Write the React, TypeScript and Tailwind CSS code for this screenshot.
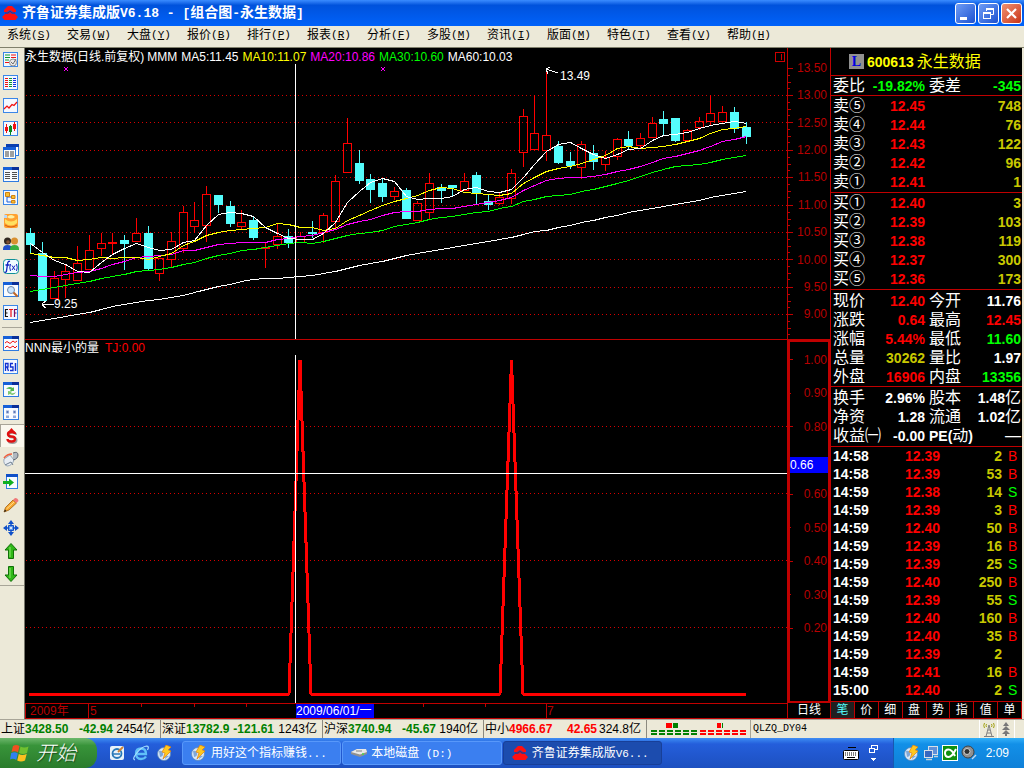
import React from "react";

type Tone = "w" | "r" | "g" | "y";

const tone: Record<Tone, string> = {
  w: "text-white",
  r: "text-[#ff0000]",
  g: "text-[#00ff00]",
  y: "text-[#c8c800]",
};

/* ---------- text helpers ---------- */

// Splits a string so that Latin runs can be set in their own face and size.
function Mixed({ text, latin }: { text: string; latin: string }) {
  const parts = text.match(/[\x00-\x7f]+|[^\x00-\x7f]+/g) ?? [];
  return (
    <>
      {parts.map((p, i) =>
        p.charCodeAt(0) < 128 ? (
          <span key={i} className={latin}>
            {p}
          </span>
        ) : (
          <span key={i}>{p}</span>
        ),
      )}
    </>
  );
}

/* ---------- title bar and menu ---------- */

function HouseLogo({ className }: { className: string }) {
  return (
    <svg viewBox="0 0 16 16" className={className} aria-hidden="true">
      <path d="M6 1H10L14 5V7H11L8 5L5 7H2V5Z" fill="#ff1010" />
      <path d="M3 9H6L8 7.500L10 9H13L16 12L13.500 15H2.500L0 12Z" fill="#ff1010" />
      <path d="M3 8H6L8 6.200L10 8H13" stroke="#901030" strokeWidth="0.800" fill="none" />
    </svg>
  );
}

function TitleBar() {
  const base =
    "flex size-[21px] items-center justify-center rounded-[3px] border border-white";
  return (
    <header className="flex h-[26px] items-center justify-between bg-linear-to-b from-[#3a8cff] via-[#0052dc] via-20% to-[#0062fa] pr-[2px] pl-[2px]">
      <div className="flex items-center gap-1">
        <HouseLogo className="size-4" />
        <h1 className="text-[14px] leading-5 font-bold whitespace-pre text-white">
          <Mixed
            text="齐鲁证券集成版V6.18 - [组合图-永生数据]"
            latin="font-['Liberation_Mono',monospace] text-[13px]"
          />
        </h1>
      </div>
      <div className="flex gap-[2px]">
        <button aria-label="最小化" className={`${base} bg-linear-to-br from-[#6f9cf5] to-[#1c50d0]`}>
          <svg viewBox="0 0 19 19" className="size-[19px]" aria-hidden="true">
            <rect x="4" y="13" width="7" height="3" fill="#fff" />
          </svg>
        </button>
        <button aria-label="还原" className={`${base} bg-linear-to-br from-[#6f9cf5] to-[#1c50d0]`}>
          <svg viewBox="0 0 19 19" className="size-[19px]" aria-hidden="true" fill="none" stroke="#fff">
            <path d="M7.500 7V4.500H14.500V10.500H12" />
            <path d="M7 5H15" strokeWidth="2" />
            <rect x="4.500" y="8.500" width="7" height="6" />
            <path d="M4 9H12" strokeWidth="2" />
          </svg>
        </button>
        <button aria-label="关闭" className={`${base} bg-linear-to-br from-[#f09070] to-[#c83010]`}>
          <svg viewBox="0 0 19 19" className="size-[19px]" aria-hidden="true">
            <path d="M5 5L14 14M14 5L5 14" stroke="#fff" strokeWidth="2.200" />
          </svg>
        </button>
      </div>
    </header>
  );
}

const MENUS: [string, string][] = [
  ["系统", "S"],
  ["交易", "W"],
  ["大盘", "Y"],
  ["报价", "B"],
  ["排行", "P"],
  ["报表", "R"],
  ["分析", "F"],
  ["多股", "M"],
  ["资讯", "I"],
  ["版面", "M"],
  ["特色", "T"],
  ["查看", "V"],
  ["帮助", "H"],
];

function MenuBar() {
  return (
    <nav className="flex h-[22px] border-b border-[#80806c] bg-[#ece9d8] pb-1 pl-[7px]">
      {MENUS.map(([label, key], i) => (
        <button key={i} className="flex w-[60px] items-center text-[12px] leading-4 text-black">
          {label}
          <span className="font-['Liberation_Mono',monospace] text-[11px]">
            (<u>{key}</u>)
          </span>
        </button>
      ))}
    </nav>
  );
}

/* ---------- tool strip ---------- */

const Win = () => (
  <>
    <rect x="0.5" y="0.5" width="15" height="14" fill="#f8fbff" stroke="#2f7be0" />
    <rect x="0" y="0" width="16" height="3" fill="#1660d8" />
    <rect x="9" y="0" width="7" height="3" fill="#0a2f98" />
  </>
);
const Frame = () => <rect x="0.5" y="0.5" width="14" height="14" fill="#f4f8ff" stroke="#3a86e8" />;

const TOOLS_A: [string, React.ReactNode][] = [
  [
    "自选股",
    <>
      <Frame />
      <path d="M2 3H7M2 5.500H7M2 8H6" stroke="#0a9a30" />
      <path d="M8 3H13M8 5.500H13" stroke="#f01010" />
      <path d="M2 10.500H6" stroke="#f01010" />
      <circle cx="10" cy="10.500" r="3.500" fill="#e8e8e8" stroke="#909090" />
      <path d="M8 10L10 12L13 7" stroke="#707070" fill="none" />
    </>,
  ],
  [
    "行情列表",
    <>
      <Frame />
      <path d="M2 3.500H5M2 5.500H5M2 7.500H5M2 9.500H5M2 11.500H5" stroke="#f01010" />
      <path d="M6 3.500H9M6 5.500H9M6 7.500H9M6 9.500H9M6 11.500H9" stroke="#0a9a30" />
      <path d="M10 3.500H13M10 5.500H13M10 7.500H13M10 9.500H13M10 11.500H13" stroke="#1030e0" />
    </>,
  ],
  [
    "分时图",
    <>
      <Frame />
      <path d="M1 11L4 8L6 10L9 6.500L11 7.500L14 4" stroke="#f01010" strokeWidth="1.200" fill="none" />
    </>,
  ],
  [
    "K线图",
    <>
      <Frame />
      <path d="M3.500 3V12M11.500 1V10" stroke="#f01010" />
      <path d="M7.500 4V14" stroke="#0a8a20" />
      <path d="M2 6H5V10H2ZM10 3H13V8H10Z" fill="#f01010" />
      <path d="M6 5H9V11H6Z" fill="#0a8a20" />
    </>,
  ],
  [
    "多窗口",
    <>
      <rect x="3.500" y="0.500" width="12" height="11" fill="#fff" stroke="#2f7be0" />
      <rect x="3" y="0" width="13" height="3" fill="#0a3fb0" />
      <rect x="0.500" y="3.500" width="12" height="11" fill="#fff" stroke="#2f7be0" />
      <rect x="0" y="3" width="13" height="3" fill="#1660d8" />
      <path d="M2 8H6M7 8H11M2 10H6M7 10H11M2 12H6M7 12H11" stroke="#404040" />
    </>,
  ],
  [
    "报表窗口",
    <>
      <Win />
      <path d="M2 5.500H7M9 5.500H14M2 7.500H7M9 7.500H14M2 9.500H7M9 9.500H14M2 11.500H7M9 11.500H14" stroke="#505050" />
    </>,
  ],
  [
    "板块树",
    <>
      <Frame />
      <path d="M4 6V12H9M4 7H9" stroke="#1a60d8" fill="none" />
      <path d="M2.500 2.500H6.500V6.500H2.500ZM8.500 5.500H12V8.500H8.500ZM8.500 10.500H12V13H8.500Z" fill="#f8c030" stroke="#d08010" />
    </>,
  ],
  [
    "元宝",
    <>
      <rect x="1" y="1" width="14" height="14" rx="2" fill="#ffa030" />
      <path d="M2 6Q8 11 14 6V10Q8 15 2 10Z" fill="#ffe060" />
      <path d="M4 4Q8 0 12 4Q8 7 4 4Z" fill="#fff0a0" />
      <path d="M2 12Q8 16 14 12" stroke="#d86010" fill="none" />
      <path d="M1 2H4V5H1Z" fill="#b8d8f8" />
    </>,
  ],
  [
    "用户",
    <>
      <circle cx="4.500" cy="5" r="3.500" fill="#302820" />
      <circle cx="11.500" cy="5" r="3.500" fill="#d89030" />
      <path d="M0 13Q0 9 4.500 9T9 13V14H0Z" fill="#2050c8" />
      <path d="M7 13Q7 9 11.500 9T16 13V14H7Z" fill="#38b040" />
      <circle cx="5" cy="6" r="1.800" fill="#805030" />
    </>,
  ],
  [
    "公式",
    <>
      <rect x="0.500" y="0.500" width="15" height="14" rx="3" fill="#f0fcff" stroke="#109098" />
      <path d="M7 2.500Q5 1.500 4.500 5L3.500 12Q3 14 1.500 13M2.500 6H6.500" stroke="#1020c0" strokeWidth="1.300" fill="none" />
      <path d="M7.500 5Q6 8.500 7.500 12M13.500 5Q15 8.500 13.500 12M9 6.500L12 11M12 6.500L9 11" stroke="#1020c0" fill="none" />
    </>,
  ],
  [
    "查找",
    <>
      <Win />
      <circle cx="8" cy="8" r="3.500" fill="#c8e4ff" stroke="#7088a8" />
      <path d="M10.500 10.500L14.500 14.500" stroke="#c06828" strokeWidth="2.200" />
    </>,
  ],
  [
    "ETF",
    <>
      <Frame />
      <path d="M5 4.500H2.500V11.500H5M2.500 8H4.500" stroke="#101010" fill="none" strokeWidth="1.200" />
      <path d="M6 4.500H10M8 4.500V12" stroke="#f01010" fill="none" strokeWidth="1.200" />
      <path d="M14 4.500H11.500V12M11.500 8H13.500" stroke="#801060" fill="none" strokeWidth="1.200" />
    </>,
  ],
];

const TOOLS_B: [string, React.ReactNode][] = [
  [
    "多周期",
    <>
      <Win />
      <path d="M2 7L4 5.500L7 7.500L10 5L12 6.500L14 5" stroke="#f01010" fill="none" />
      <path d="M2 12L4 10L7 12L10 10L12 12L14 10" stroke="#f01010" fill="none" />
    </>,
  ],
  [
    "RSI",
    <>
      <Frame />
      <path d="M2.500 12V4.500H5V8H2.500M4 8L5.500 12" stroke="#1030d0" fill="none" strokeWidth="1.300" />
      <path d="M10 4.500H7.500V8H10V11.500H7" stroke="#1030d0" fill="none" strokeWidth="1.300" />
      <path d="M12.500 4V12" stroke="#1030d0" strokeWidth="1.500" />
    </>,
  ],
  [
    "刷新",
    <>
      <Win />
      <path d="M3 7Q6 3.500 10 6L11 5V9H7L8 7.500Q6 6.500 3 7Z" fill="#50b850" />
      <path d="M13 10Q11 14.500 7 12L5 13V9L9 9.500L8 11Q10 12 13 10Z" fill="#80c870" />
    </>,
  ],
  [
    "设置",
    <>
      <Win />
      <path d="M3 5.500H6V8.500H3ZM10 5.500H13V8.500H10ZM3 10.500H6V13H3ZM10 10.500H13V13H10Z" fill="#90a8d8" />
      <path d="M4 6.500H5V7.500H4ZM11 6.500H12V7.500H11Z" fill="#304890" />
    </>,
  ],
  [
    "资金",
    <>
      <path d="M12 6Q12 3.500 8.500 3.500Q5 3.500 5 6Q5 8.500 8.500 8.500Q12.500 8.500 12.500 11Q12.500 14 8.500 14Q4.500 14 4.500 11.500" stroke="#a0a0a0" strokeWidth="2" fill="none" transform="translate(1 1)" />
      <path d="M12 6Q12 4 8.500 4Q5 4 5 6Q5 8.500 8.500 8.500Q12 8.500 12 11Q12 13.500 8.500 13.500Q4.500 13.500 4.500 11" stroke="#e01010" strokeWidth="2.400" fill="none" />
      <path d="M8.500 0L12 4H5Z" fill="#e01010" />
    </>,
  ],
  [
    "电话",
    <>
      <path d="M1 8L7 4L11 9Q9 15 4 15Q0 13 1 8Z" fill="#e8eef4" stroke="#98a8b8" />
      <path d="M10 2Q15 0 15 4Q15 8 10 9" fill="#b0b8c0" stroke="#606870" />
      <path d="M1 7Q4 3 9 3" stroke="#f06040" strokeWidth="1.500" fill="none" />
      <path d="M2 14L8 11L10 14" stroke="#708090" fill="none" />
    </>,
  ],
  [
    "转到",
    <>
      <rect x="3.500" y="0.500" width="11" height="14" fill="#f8fbff" stroke="#2f7be0" />
      <rect x="3" y="0" width="12" height="3" fill="#1050c8" />
      <path d="M0 7H6V4.500L11 8.500L6 12.500V10H0Z" fill="#10b020" />
    </>,
  ],
  [
    "画线",
    <>
      <path d="M1 15L2.500 10.500L10 3L13.500 6L6 13Z" fill="#f8a830" stroke="#a06010" strokeWidth="0.800" />
      <path d="M10 3L12 1Q15 1 15.500 4L13.500 6Z" fill="#f07878" />
      <path d="M1 15L2 12.500L3.500 14Z" fill="#202020" />
      <path d="M3.500 12L11 5" stroke="#ffe090" />
    </>,
  ],
  [
    "移动",
    <>
      <path d="M8 0L11 4H5ZM8 16L5 12H11ZM0 8L4 5V11ZM16 8L12 11V5Z" fill="#1050c8" />
      <path d="M8 3V13M3 8H13" stroke="#1050c8" strokeWidth="1.500" />
      <path d="M5.500 5.500H10.500V10.500H5.500Z" fill="#6098e8" stroke="#1050c8" />
      <circle cx="8" cy="8" r="1" fill="#fff" />
    </>,
  ],
  [
    "向上",
    <>
      <path d="M8 0.500L14 7H10.500V15.500H5.500V7H2Z" fill="#30b818" stroke="#107008" />
      <path d="M7 4V14" stroke="#90e870" />
    </>,
  ],
  [
    "向下",
    <>
      <path d="M8 15.500L14 9H10.500V0.500H5.500V9H2Z" fill="#30b818" stroke="#107008" />
      <path d="M7 2V12" stroke="#90e870" />
    </>,
  ],
];

function ToolGroup({ items, pressed }: { items: [string, React.ReactNode][]; pressed?: number }) {
  return (
    <div className="flex flex-col">
      {items.map(([label, art], i) => (
        <button
          key={label}
          aria-label={label}
          className={
            i === pressed
              ? "flex h-[23px] items-center border-t border-l border-[#a8a598] bg-[#faf8ee] pl-[2px]"
              : "flex h-[23px] items-center pl-[3px]"
          }
        >
          <svg viewBox="0 0 16 16" className="size-4" aria-hidden="true">
            {art}
          </svg>
        </button>
      ))}
    </div>
  );
}

function ToolStrip() {
  return (
    <aside className="flex w-[25px] shrink-0 flex-col border-r border-[#77776c] bg-[#ece9d8]">
      <ToolGroup items={TOOLS_A} />
      <hr className="mx-[2px] mt-[3px] mb-[4px] border-[#a8a598]" />
      <ToolGroup items={TOOLS_B} pressed={4} />
      <hr className="border-[#a8a598]" />
    </aside>
  );
}

/* ---------- chart data ---------- */

// direction, high, body top, body bottom, low
type Candle = ["r" | "c", number, number, number, number];

const CANDLES: Candle[] = [
  ["c", 228, 233, 245, 253],
  ["c", 242, 253, 301, 301],
  ["r", 271, 278, 299, 299],
  ["r", 265, 271, 280, 298],
  ["r", 246, 263, 281, 281],
  ["r", 235, 250, 270, 270],
  ["r", 233, 243, 249, 256],
  ["r", 233, 242, 243, 254],
  ["c", 235, 240, 244, 270],
  ["r", 218, 233, 242, 242],
  ["c", 226, 233, 269, 270],
  ["r", 258, 258, 274, 281],
  ["r", 232, 241, 260, 267],
  ["r", 206, 212, 249, 253],
  ["r", 202, 220, 227, 233],
  ["r", 186, 194, 226, 242],
  ["c", 195, 195, 205, 213],
  ["c", 201, 206, 224, 227],
  ["r", 210, 222, 227, 230],
  ["c", 217, 220, 238, 240],
  ["r", 243, 247, 249, 268],
  ["r", 223, 236, 245, 249],
  ["c", 229, 236, 243, 248],
  ["r", 232, 236, 243, 243],
  ["c", 221, 232, 234, 238],
  ["r", 213, 215, 233, 243],
  ["r", 175, 181, 222, 229],
  ["r", 118, 143, 173, 173],
  ["c", 150, 163, 181, 184],
  ["c", 174, 179, 190, 203],
  ["c", 178, 183, 197, 202],
  ["r", 187, 191, 197, 200],
  ["c", 188, 190, 219, 219],
  ["r", 201, 203, 221, 221],
  ["r", 173, 183, 213, 220],
  ["c", 184, 187, 191, 203],
  ["c", 185, 185, 188, 197],
  ["r", 173, 181, 191, 191],
  ["c", 172, 175, 194, 204],
  ["c", 194, 201, 205, 210],
  ["r", 193, 197, 204, 205],
  ["r", 169, 173, 199, 204],
  ["r", 109, 116, 153, 167],
  ["r", 95, 133, 150, 150],
  ["r", 70, 135, 151, 161],
  ["c", 141, 146, 163, 164],
  ["c", 152, 161, 166, 169],
  ["r", 141, 144, 168, 179],
  ["c", 145, 153, 162, 170],
  ["r", 151, 157, 165, 171],
  ["r", 138, 139, 157, 160],
  ["c", 131, 139, 146, 149],
  ["r", 133, 138, 146, 148],
  ["r", 117, 123, 138, 138],
  ["c", 111, 119, 124, 135],
  ["c", 118, 118, 141, 142],
  ["r", 129, 130, 141, 141],
  ["r", 117, 121, 128, 130],
  ["r", 95, 113, 122, 125],
  ["r", 106, 112, 122, 122],
  ["c", 107, 112, 129, 133],
  ["c", 122, 127, 137, 144],
];

const MA_LINES: { color: string; ys: number[] }[] = [
  {
    color: "#ffffff",
    ys: [
      322, 320, 318, 316, 314, 312, 309, 306, 304, 302, 300, 299, 297, 295, 292, 289, 286, 284, 281, 279, 278, 278, 277, 276, 275,
      273, 271, 268, 265, 263, 261, 258, 255, 253, 251, 249, 247, 245, 243, 241, 239, 237, 234, 231, 230, 227, 225, 222, 220, 217,
      215, 212, 210, 208, 206, 204, 202, 200, 197, 195, 193, 191,
    ],
  },
  {
    color: "#00ff00",
    ys: [
      291, 289, 287, 285, 283, 281, 278, 276, 274, 271, 270, 269, 267, 264, 262, 258, 255, 253, 250, 249, 247, 245, 243, 242, 243,
      241, 238, 235, 233, 232, 230, 226, 224, 222, 219, 217, 216, 214, 212, 211, 208, 206, 201, 199, 196, 195, 194, 191, 189, 186,
      183, 180, 176, 172, 169, 166, 165, 164, 162, 159, 157, 155,
    ],
  },
  {
    color: "#ff00ff",
    ys: [
      275, 276, 276, 274, 272, 271, 268, 264, 261, 257, 256, 255, 254, 250, 250, 247, 244, 243, 242, 242, 242, 239, 238, 236, 235,
      232, 229, 224, 221, 219, 215, 212, 211, 211, 209, 208, 208, 206, 204, 202, 200, 197, 190, 185, 180, 178, 177, 177, 176, 174,
      171, 169, 166, 162, 158, 156, 153, 150, 146, 141, 139, 136,
    ],
  },
  {
    color: "#ffff00",
    ys: [
      253, 255, 257, 257, 260, 259, 257, 258, 257, 257, 259, 256, 253, 245, 241, 235, 232, 230, 229, 228, 227, 223, 224, 227, 227,
      230, 228, 220, 215, 210, 205, 201, 198, 195, 190, 187, 188, 192, 193, 194, 195, 193, 183, 177, 171, 168, 166, 163, 159, 155,
      148, 146, 148, 147, 146, 144, 141, 138, 133, 129, 128, 126,
    ],
  },
  {
    color: "#ffffff",
    ys: [
      243, 252, 260, 264, 271, 272, 262, 254, 248, 243, 247, 250, 249, 242, 240, 225, 214, 212, 213, 216, 227, 233, 238, 239, 239,
      233, 222, 202, 191, 182, 178, 181, 196, 199, 198, 198, 196, 189, 187, 191, 192, 189, 177, 164, 151, 144, 142, 148, 154, 158,
      154, 149, 148, 140, 135, 134, 132, 128, 125, 123, 121, 123,
    ],
  },
];

const xAt = (i: number) => Math.round(30.3 + 11.725 * i);

const PRICES = ["13.50", "13.00", "12.50", "12.00", "11.50", "11.00", "10.50", "10.00", "9.50", "9.00"];
// The empty entry lies behind the cursor's value box.
const LEVELS = ["1.00", "0.90", "0.80", "", "0.60", "0.50", "0.40", "0.30", "0.20"];
const priceY = (i: number) => Math.round(67.5 + 27.4 * i);

function PricePlot() {
  return (
    <svg
      viewBox="25 64 762 275"
      preserveAspectRatio="none"
      shapeRendering="crispEdges"
      className="absolute inset-0 size-full"
      aria-hidden="true"
    >
      {PRICES.slice(1).map((p, i) => (
        <line
          key={p}
          x1="26"
          x2="787"
          y1={priceY(i + 1) + 0.5}
          y2={priceY(i + 1) + 0.5}
          stroke="#d80000"
          strokeDasharray="1 3"
        />
      ))}
      {CANDLES.map(([dir, hi, top, bot, lo], i) => {
        const c = xAt(i);
        if (dir === "c") {
          return (
            <g key={i} fill="#54fcfc">
              <rect x={c} y={hi} width="1" height={lo - hi} />
              <rect x={c - 4} y={top} width="9" height={bot - top} />
            </g>
          );
        }
        return (
          <g key={i} fill="#ff0000">
            <rect x={c} y={hi} width="1" height={top - hi} />
            <rect x={c} y={bot} width="1" height={lo - bot} />
            <rect x={c - 3.5} y={top + 0.5} width="8" height={Math.max(bot - top - 1, 1)} fill="none" stroke="#ff0000" />
          </g>
        );
      })}
      {MA_LINES.map((l, i) => (
        <polyline
          key={i}
          points={l.ys.map((y, j) => `${xAt(j) + 0.5},${y + 0.5}`).join(" ")}
          fill="none"
          stroke={l.color}
        />
      ))}
      {[64, 381].map((x) => (
        <g key={x} fill="#ff00ff">
          <rect x={x} y="67" width="1" height="1" />
          <rect x={x + 3} y="67" width="1" height="1" />
          <rect x={x + 1} y="68" width="2" height="2" />
          <rect x={x} y="70" width="1" height="1" />
          <rect x={x + 3} y="70" width="1" height="1" />
        </g>
      ))}
      <path d="M42 304.500H54M42 304L46 301M42 305L46 308" stroke="#fff" fill="none" />
      <path d="M546 69L558 73M546 69L550 67M546 69L548 74" stroke="#fff" fill="none" />
      <rect x="295" y="64" width="1" height="275" fill="#fff" />
    </svg>
  );
}

function SignalPlot() {
  return (
    <svg
      viewBox="25 355 762 348"
      preserveAspectRatio="none"
      shapeRendering="crispEdges"
      className="absolute inset-0 size-full"
      aria-hidden="true"
    >
      {[426, 493, 560, 627].map((y) => (
        <line key={y} x1="26" x2="787" y1={y + 0.5} y2={y + 0.5} stroke="#d80000" strokeDasharray="1 3" />
      ))}
      <polyline
        points="29,694 289,694 300,360 311,694 500,694 511.5,360 523,694 746,694"
        fill="none"
        stroke="#ff0000"
        strokeWidth="3"
        strokeLinejoin="bevel"
      />
      <rect x="295" y="355" width="1" height="348" fill="#fff" />
      <rect x="25" y="473" width="762" height="1" fill="#fff" />
    </svg>
  );
}

function PricePane() {
  return (
    <section className="flex grow-[291] basis-0 border-b border-[#c00000]">
      <div className="flex min-w-0 flex-1 flex-col">
        <div className="flex h-4 items-center justify-between pt-[2px] pr-[2px] leading-4 whitespace-nowrap text-white">
          <div className="flex gap-1">
            <span className="flex">
              永生数据(日线.前复权)
              <span className="pl-[3px]">MMM</span>
            </span>
            <span>MA5:11.45</span>
            <span className="text-[#ffff00]">MA10:11.07</span>
            <span className="text-[#ff00ff]">MA20:10.86</span>
            <span className="text-[#00ff00]">MA30:10.60</span>
            <span>MA60:10.03</span>
          </div>
          <svg viewBox="0 0 10 10" className="size-[10px]" shapeRendering="crispEdges" aria-hidden="true">
            <path d="M0.500 0.500H9.500V9.500H0.500ZM6.500 2V8" fill="none" stroke="#d00000" />
          </svg>
        </div>
        <div className="relative flex-1">
          <PricePlot />
          <span className="absolute top-[232px] left-[29px] leading-4 text-white">9.25</span>
          <span className="absolute top-[4px] left-[535px] leading-4 text-white">13.49</span>
        </div>
      </div>
      <div className="relative flex w-[43px] shrink-0 flex-col border-l border-[#c00000] pt-[6px] pr-[3px] pb-[11px] text-[#b80000]">
        <svg
          viewBox="0 48 6 291"
          preserveAspectRatio="none"
          shapeRendering="crispEdges"
          className="absolute inset-y-0 left-0 h-full w-[6px]"
          aria-hidden="true"
        >
          {PRICES.map((p, i) => (
            <g key={p} fill="#c00000">
              <rect x="0" y={priceY(i)} width="5" height="1" />
              <rect x="0" y={priceY(i) + 7} width="2" height="1" />
              <rect x="0" y={priceY(i) + 14} width="3" height="1" />
              <rect x="0" y={priceY(i) + 20} width="2" height="1" />
            </g>
          ))}
        </svg>
        {PRICES.map((p) => (
          <span key={p} className="flex flex-1 items-center justify-end leading-3">
            {p}
          </span>
        ))}
      </div>
    </section>
  );
}

function SignalPane() {
  return (
    <section className="flex grow-[363] basis-0">
      <div className="flex min-w-0 flex-1 flex-col border-r border-[#c00000]">
        <div className="flex h-[15px] items-center gap-[6px] leading-4 whitespace-nowrap text-white">
          <span>NNN最小的量</span>
          <span className="text-[#ff0000]">TJ:0.00</span>
        </div>
        <div className="relative flex-1">
          <SignalPlot />
        </div>
      </div>
      <div className="relative flex w-[42px] shrink-0 flex-col border-2 border-[#c00000] pt-px pr-px pb-[56px] text-[#b80000]">
        {LEVELS.map((v, i) => (
          <span key={i} className="flex flex-1 items-center justify-between leading-3">
            <i className={i % 2 === 0 ? "h-px w-[3px] bg-[#c00000]" : "h-px w-px bg-[#c00000]"} />
            {v}
          </span>
        ))}
        <span className="absolute top-[115px] right-0 left-0 h-4 bg-[#0000ff] leading-4 text-white">
          0.66
        </span>
      </div>
    </section>
  );
}

function DateAxis() {
  return (
    <div className="flex h-4 border-b border-[#c00000] leading-[15px]">
      <div className="relative min-w-0 flex-1 border-t border-r border-l border-[#c00000] text-[#b80000]">
        <svg
          viewBox="26 704 760 14"
          preserveAspectRatio="none"
          shapeRendering="crispEdges"
          className="absolute inset-0 size-full"
          aria-hidden="true"
        >
          <path
            d="M88.500 704V718M141.500 704V707M194.500 704V707M246.500 704V707M422.500 704V707M484.500 704V707M545.500 704V718"
            stroke="#c00000"
          />
        </svg>
        <span className="absolute top-0 left-[4px]">2009年</span>
        <span className="absolute top-0 left-[64px]">5</span>
        <span className="absolute top-0 left-[270px] h-[14px] w-[78px] overflow-hidden bg-[#0000ff] whitespace-nowrap text-white">
          2009/06/01/一
        </span>
        <span className="absolute top-0 left-[521px]">7</span>
      </div>
      <button className="w-[42px] shrink-0 text-center text-white">日线</button>
    </div>
  );
}

/* ---------- quote panel ---------- */

type Row = [string, string, Tone, string, string, Tone];

const RATIO: Row[] = [["委比", "-19.82%", "g", "委差", "-345", "g"]];
const ASKS: Row[] = [
  ["卖⑤", "12.45", "r", "", "748", "y"],
  ["卖④", "12.44", "r", "", "76", "y"],
  ["卖③", "12.43", "r", "", "122", "y"],
  ["卖②", "12.42", "r", "", "96", "y"],
  ["卖①", "12.41", "r", "", "1", "y"],
];
const BIDS: Row[] = [
  ["买①", "12.40", "r", "", "3", "y"],
  ["买②", "12.39", "r", "", "103", "y"],
  ["买③", "12.38", "r", "", "119", "y"],
  ["买④", "12.37", "r", "", "300", "y"],
  ["买⑤", "12.36", "r", "", "173", "y"],
];
const STATS: Row[] = [
  ["现价", "12.40", "r", "今开", "11.76", "w"],
  ["涨跌", "0.64", "r", "最高", "12.45", "r"],
  ["涨幅", "5.44%", "r", "最低", "11.60", "g"],
  ["总量", "30262", "y", "量比", "1.97", "w"],
  ["外盘", "16906", "r", "内盘", "13356", "g"],
];
const FINANCE: Row[] = [
  ["换手", "2.96%", "w", "股本", "1.48亿", "w"],
  ["净资", "1.28", "w", "流通", "1.02亿", "w"],
  ["收益㈠", "-0.00", "w", "PE(动)", "—", "w"],
];

function QuoteBlock({ rows, pad }: { rows: Row[]; pad: string }) {
  return (
    <div className={`border-b border-[#c00000] pr-px pl-[2px] ${pad}`}>
      <table className="w-full table-fixed border-collapse">
        <tbody>
          {rows.map(([a, av, at, b, bv, bt]) => (
            <tr key={a} className="h-[19px] text-[16px] leading-4 whitespace-nowrap">
              <th scope="row" className="w-[34px] p-0 text-left font-normal text-white">
                {a}
              </th>
              <td className={`w-[58px] p-0 text-right text-[14px] font-bold ${tone[at]}`}>{av}</td>
              <td className="w-[38px] p-0 pl-1 text-left text-white">
                <Mixed text={b} latin="text-[14px] font-bold leading-none" />
              </td>
              <td className={`p-0 text-right ${tone[bt]}`}>
                <Mixed text={bv} latin="text-[14px] font-bold leading-none" />
              </td>
            </tr>
          ))}
        </tbody>
      </table>
    </div>
  );
}

const TRADES: [string, string, string, string][] = [
  ["14:58", "12.39", "2", "B"],
  ["14:58", "12.39", "53", "B"],
  ["14:59", "12.38", "14", "S"],
  ["14:59", "12.39", "3", "B"],
  ["14:59", "12.40", "50", "B"],
  ["14:59", "12.39", "16", "B"],
  ["14:59", "12.39", "25", "S"],
  ["14:59", "12.40", "250", "B"],
  ["14:59", "12.39", "55", "S"],
  ["14:59", "12.40", "160", "B"],
  ["14:59", "12.40", "35", "B"],
  ["14:59", "12.39", "2", ""],
  ["14:59", "12.41", "16", "B"],
  ["15:00", "12.40", "2", "S"],
];

const TABS = ["笔", "价", "细", "盘", "势", "指", "值", "单"];

function QuotePanel() {
  return (
    <aside className="flex w-[192px] shrink-0 flex-col border-l border-[#c00000] bg-black">
      <div className="flex h-7 items-center gap-[3px] border-b border-[#c00000] pl-[18px] text-[#ffff00]">
        <span className="flex size-[15px] items-center justify-center bg-[#909090] font-['Liberation_Serif',serif] text-[14px] leading-none font-bold text-[#0000e0]">
          L
        </span>
        <span className="text-[14px] leading-4 font-bold">600613</span>
        <span className="text-[16px] leading-4">永生数据</span>
      </div>
      <QuoteBlock rows={RATIO} pad="" />
      <QuoteBlock rows={ASKS} pad="pb-px" />
      <QuoteBlock rows={BIDS} pad="pb-px" />
      <QuoteBlock rows={STATS} pad="pt-px" />
      <QuoteBlock rows={FINANCE} pad="pt-px pb-px" />
      <div className="flex-1 pl-[2px]">
        <table className="w-full table-fixed border-collapse">
          <tbody>
            {TRADES.map(([t, p, v, f], i) => (
              <tr key={i} className="h-[18px] text-[14px] leading-4 font-bold">
                <td className="w-[36px] p-0 text-white">{t}</td>
                <td className="w-[71px] p-0 text-right text-[#ff0000]">{p}</td>
                <td className="w-[62px] p-0 text-right text-[#c8c800]">{v}</td>
                <td className={`p-0 pl-[6px] font-normal ${f === "S" ? "text-[#00ff00]" : "text-[#ff0000]"}`}>{f}</td>
              </tr>
            ))}
          </tbody>
        </table>
      </div>
      <div className="flex h-[18px] border-t border-b border-[#c00000]">
        {TABS.map((t, i) => (
          <button
            key={t}
            className={
              i === 0
                ? "flex-1 border-r border-[#c00000] bg-[#202020] leading-4 text-[#54fcfc]"
                : "flex-1 border-r border-[#c00000] leading-4 text-white"
            }
          >
            {t}
          </button>
        ))}
      </div>
    </aside>
  );
}

/* ---------- status bar ---------- */

const INDICES: [string, string, string, string, boolean, string][] = [
  ["上证", "3428.50", "-42.94", "2454亿", false, "w-[161px]"],
  ["深证", "13782.9", "-121.61", "1243亿", false, "w-[162px]"],
  ["沪深", "3740.94", "-45.67", "1940亿", false, "w-[161px]"],
  ["中小", "4966.67", "42.65", "324.8亿", true, "w-[163px]"],
];

function StatusBar() {
  return (
    <footer className="flex h-[19px] items-stretch border-t border-[#a8a598] bg-[#ece9d8] text-[12px] leading-[17px] whitespace-nowrap text-black">
      {INDICES.map(([name, price, change, vol, up, w]) => (
        <div
          key={name}
          className={`flex items-center border-r border-[#8c8a80] pr-[5px] pl-px ${w} ${up ? "[&_b]:text-[#ff0000]" : "[&_b]:text-[#008000]"}`}
        >
          <span>{name}</span>
          <b className="w-[45px]">{price}</b>
          <b className="w-[43px] text-right">{change}</b>
          <span className="flex-1 text-right">{vol}</span>
        </div>
      ))}
      <div className="flex w-[104px] items-center justify-center border-r border-[#a8a598]">
        <svg viewBox="0 0 96 15" className="h-[15px] w-[96px]" shapeRendering="crispEdges" aria-hidden="true">
          <rect x="15" y="1" width="6" height="5" fill="#ff0000" />
          <rect x="22" y="1" width="5" height="5" fill="#008000" />
          <rect x="66" y="1" width="4" height="5" fill="#ff0000" />
          <rect x="71" y="1" width="1" height="5" fill="#008000" />
          {Array.from({ length: 12 }, (_, i) => (
            <g key={i} fill={i < 6 ? "#008000" : "#ff0000"}>
              <rect x={i * 8 + (i > 5 ? 1 : 0)} y="8" width="6" height="2" />
              <rect x={i * 8 + (i > 5 ? 1 : 0)} y="11" width="6" height="2" />
            </g>
          ))}
        </svg>
      </div>
      <span className="flex-1 pl-[2px] font-['Liberation_Mono',monospace] text-[10px]">QLZQ_DY04</span>
      <div className="flex w-[18px] items-center justify-center border-l border-white">
        <svg viewBox="0 0 12 15" className="h-[15px] w-3" aria-hidden="true" fill="none">
          <path d="M1.500 1Q0 3.500 1.500 6M3.500 2Q2.500 3.500 3.500 5M10.500 1Q12 3.500 10.500 6M8.500 2Q9.500 3.500 8.500 5" stroke="#a0a010" />
          <path d="M6 3L3 14.500M6 3L9 14.500M5 8H7M4 11H8M1 14.500H11" stroke="#808080" />
        </svg>
      </div>
      <div className="mr-[9px] flex w-[18px] items-center justify-center border-r border-l border-white">
        <svg viewBox="0 0 8 14" className="h-[14px] w-2" aria-hidden="true">
          <path d="M4 0L7 4H1ZM4 4L8 8H0ZM4 8L8 12H0ZM3 12H5V14H3Z" fill="#787878" />
        </svg>
      </div>
    </footer>
  );
}

/* ---------- task bar ---------- */

function BoltGlobe() {
  return (
    <svg viewBox="0 0 16 16" className="size-4 shrink-0" aria-hidden="true">
      <circle cx="7" cy="9" r="6.500" fill="#d8e8f8" stroke="#6088b8" strokeWidth="0.800" />
      <path d="M2 6Q5 5 6 8T3 12M8 14Q8 10 12 11" fill="#80a8d8" />
      <path d="M9 0L14 2L11 5L14 6L6 14L8 8L5 7Z" fill="#ffc820" stroke="#e08010" strokeWidth="0.700" />
    </svg>
  );
}

function Drive() {
  return (
    <svg viewBox="0 0 16 16" className="size-4 shrink-0" aria-hidden="true">
      <path d="M0 7L6 4H15L16 7V9L9 12L0 9Z" fill="#909090" />
      <path d="M0 7L6 4H15L16 7L9 9.500Z" fill="#e8e8e8" />
      <path d="M5 6H11" stroke="#808080" />
      <circle cx="12" cy="9" r="0.900" fill="#40e040" />
    </svg>
  );
}

function StartFlag() {
  return (
    <svg viewBox="0 0 20 18" className="h-[18px] w-5" aria-hidden="true">
      <path d="M3 2Q6 0 9.500 2L8 8.500Q5 6.500 1.500 8Z" fill="#f05020" />
      <path d="M10.500 2.500Q14 4.500 18.500 2.500L17 9Q13 11 9 9Z" fill="#70c030" />
      <path d="M1.200 9Q5 7.500 7.800 9.500L6.300 16Q3 14 0 15.500Z" fill="#3080f0" />
      <path d="M8.800 10Q12 12 16.700 10L15 16.500Q11 18.500 7.200 16.500Z" fill="#fcc020" />
    </svg>
  );
}

const TASKS: [string, React.ReactNode, boolean][] = [
  ["用好这个指标赚钱...", <BoltGlobe />, false],
  ["本地磁盘 (D:)", <Drive />, false],
  ["齐鲁证券集成版V6...", <HouseLogo className="size-4 shrink-0" />, true],
];

function TaskBar() {
  return (
    <footer className="flex h-[30px] items-stretch bg-linear-to-b from-[#3f8cf3] via-[#245edb] via-20% to-[#1d50c0] text-white">
      <button className="flex w-[97px] items-center gap-[6px] rounded-r-[12px] bg-linear-to-b from-[#6cb86c] via-[#38943a] via-25% to-[#2a7c2c] pl-[10px] text-[20px] leading-none font-light italic [text-shadow:1px_1px_1px_#1c4c1c]">
        <StartFlag />
        开始
      </button>
      <div className="flex items-center gap-[8px] pr-[9px] pl-[12px]">
        <button aria-label="显示桌面">
          <svg viewBox="0 0 16 16" className="block size-4" aria-hidden="true">
            <rect x="1" y="1" width="14" height="14" rx="2" fill="#e8f2fa" />
            <circle cx="8" cy="8.500" r="4.500" fill="none" stroke="#2878b8" strokeWidth="1.800" />
            <path d="M4 9H11" stroke="#2878b8" strokeWidth="1.500" />
            <path d="M9 7L14 2" stroke="#d08030" strokeWidth="1.800" />
          </svg>
        </button>
        <button aria-label="浏览器">
          <svg viewBox="0 0 16 16" className="block size-4" aria-hidden="true" fill="none">
            <path d="M13 11.500Q11.500 14 8 14Q3 14 3 8.500Q3 3.500 8 3.500Q13 3.500 13 9H4" stroke="#60c0f8" strokeWidth="2.300" />
            <path d="M2 15Q-1 14 3 9Q8 2 13.500 1Q16.500 1 14.500 5" stroke="#a8e0ff" strokeWidth="1.200" />
          </svg>
        </button>
        <button aria-label="证券助手">
          <BoltGlobe />
        </button>
      </div>
      <div className="flex w-[480px] min-w-0 gap-px py-[3px]">
        {TASKS.map(([label, icon, active]) => (
          <button
            key={label}
            className={
              active
                ? "flex flex-1 items-center gap-1 rounded-[3px] border border-[#183f98] bg-[#1c4cae] pl-[8px] text-[12px] leading-4 whitespace-pre"
                : "flex flex-1 items-center gap-1 rounded-[3px] border border-[#5898fa] bg-[#3b7ff0] pl-[8px] text-[12px] leading-4 whitespace-pre"
            }
          >
            {icon}
            <span>
              <Mixed text={label} latin="font-['Liberation_Mono',monospace] text-[11px]" />
            </span>
          </button>
        ))}
      </div>
      <div className="flex flex-1 items-center justify-end gap-[9px] pr-[15px]">
        <svg viewBox="0 0 16 14" className="h-[14px] w-4" aria-hidden="true">
          <path d="M5 1L6 2L7 1L8 2L9 1L10 2L11 1L12 2L13 1" stroke="#000" fill="none" />
          <rect x="0.500" y="4.500" width="15" height="9" rx="1" fill="#fff" stroke="#000" />
          <path d="M2 7H14M2 9H14" stroke="#000" strokeDasharray="1 1" />
          <path d="M4 11.500H12" stroke="#000" />
        </svg>
        <svg viewBox="0 0 10 18" className="h-[18px] w-[10px]" shapeRendering="crispEdges" aria-hidden="true">
          <path d="M3.500 4V1.500H9.500V5.500H7M1.500 4.500H6.500V8.500H1.500Z" stroke="#fff" fill="none" />
          <path d="M2 14H8L5 17Z" fill="#fff" />
        </svg>
      </div>
      <div className="flex w-[131px] items-center gap-[3px] border-l border-[#1858b0] bg-linear-to-b from-[#30b0f8] via-[#1290e8] via-20% to-[#0f80d8] pr-[15px] pl-[10px]">
        <BoltGlobe />
        <svg viewBox="0 0 16 16" className="size-4" aria-hidden="true">
          <rect x="5.500" y="1.500" width="9" height="8" fill="#6090d8" stroke="#d8e0e8" />
          <rect x="1.500" y="5.500" width="8" height="7" fill="#3868c0" stroke="#d8e0e8" />
          <path d="M3 14.500H9M11 11.500H15" stroke="#c8d0d8" strokeWidth="1.500" />
        </svg>
        <svg viewBox="0 0 16 16" className="size-4" aria-hidden="true">
          <rect x="0.500" y="0.500" width="15" height="15" fill="#109010" stroke="#fff" />
          <path d="M14 4Q10 12 6.500 12Q3 12 3 8Q3 4.500 6.500 4.500Q10 4.500 13 11" stroke="#fff" strokeWidth="2" fill="none" />
        </svg>
        <svg viewBox="0 0 16 16" className="size-4" aria-hidden="true">
          <circle cx="7" cy="7" r="6" fill="#909090" stroke="#404040" />
          <circle cx="6" cy="6.500" r="3" fill="#303030" stroke="#d0d0d0" />
          <path d="M11 14L15 10" stroke="#c0d8f0" strokeWidth="1.500" />
        </svg>
        <time className="flex-1 text-right text-[12px] leading-4">2:09</time>
      </div>
    </footer>
  );
}

export default function App() {
  return (
    <div className="flex min-h-screen min-w-0 flex-col overflow-hidden bg-[#ece9d8] font-['Liberation_Sans','Noto_Sans_CJK_SC',sans-serif] text-[12px]">
      <TitleBar />
      <MenuBar />
      <main className="flex flex-1 pr-[2px]">
        <ToolStrip />
        <div className="flex min-w-0 flex-1 flex-col bg-black">
          <PricePane />
          <SignalPane />
          <DateAxis />
        </div>
        <QuotePanel />
      </main>
      <StatusBar />
      <TaskBar />
    </div>
  );
}
